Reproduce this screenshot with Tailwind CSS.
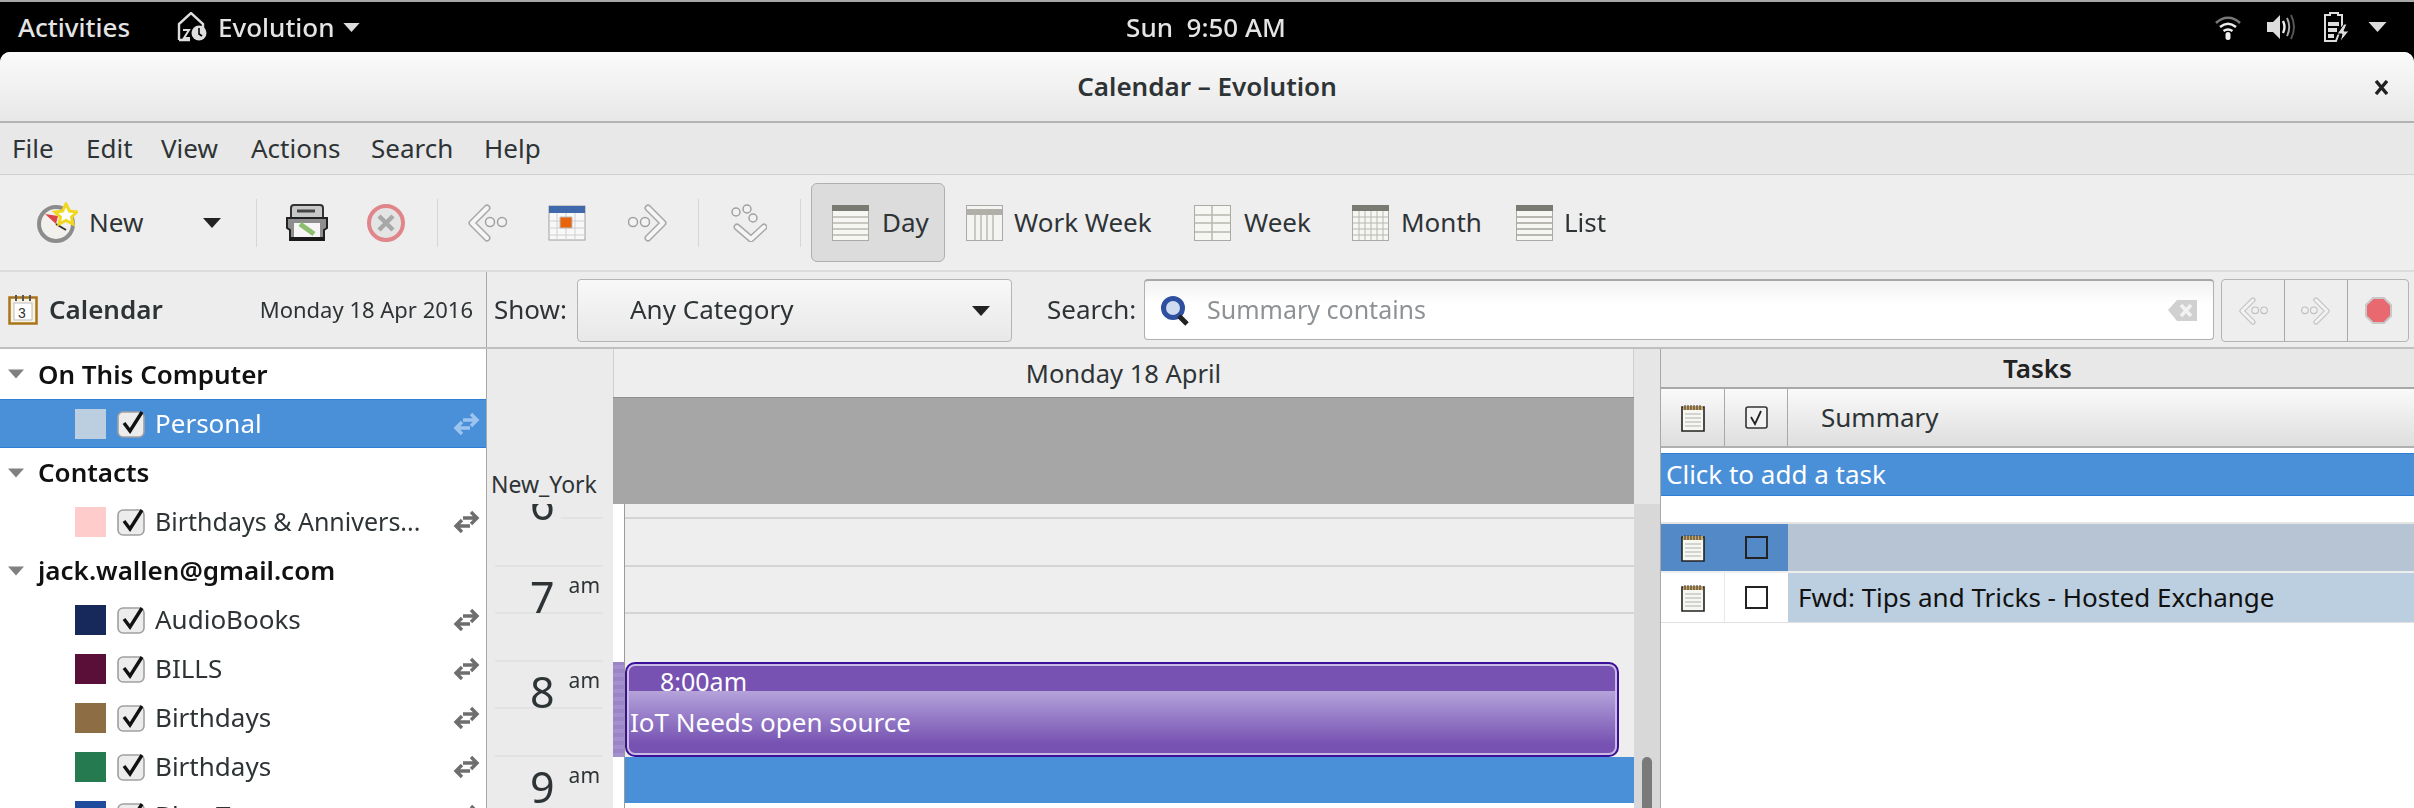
<!DOCTYPE html>
<html lang="en">
<head>
    <meta charset="UTF-8">
    <title>Calendar - Evolution</title>
    <script src="https://cdn.jsdelivr.net/npm/@tailwindcss/browser@4"></script>
</head>
<body class="bg-black overflow-hidden">
<svg class="hidden">
    <symbol id="sync" viewBox="0 0 27 26"><path d="M4 17h13M9 11l-6 6 6 6M23 9H10M18 3l6 6-6 6" fill="none" stroke="currentColor" stroke-width="3.4"/></symbol>
    <symbol id="check" viewBox="0 0 29 28"><rect x="1" y="2" width="26" height="25" rx="5" fill="#ececec" stroke="#a0a0a0" stroke-width="1.6"/><path d="M7 13l6 8L25 2" fill="none" stroke="#111" stroke-width="3.4"/></symbol>
    <symbol id="note" viewBox="0 0 24 28"><path d="M1 3h22v24H1z" fill="#f7f7f2" stroke="#222" stroke-width="1.6"/><path d="M2 2h20v4H2z" fill="#c9a868"/><path d="M4 1v5M7 1v5M10 1v5M13 1v5M16 1v5M19 1v5" stroke="#333" stroke-width="1"/><path d="M4 10h16M4 14h16M4 18h16M4 22h16" stroke="#c8c8c8" stroke-width="1.4"/></symbol>
    <symbol id="back" viewBox="0 0 40 38"><path d="M20 4L5 19l15 15" fill="none" stroke="#a8a8a8" stroke-width="7" stroke-linejoin="round" stroke-linecap="round"/><path d="M20 4L5 19l15 15" fill="none" stroke="#f5f5f5" stroke-width="4" stroke-linejoin="round" stroke-linecap="round"/><circle cx="23" cy="18" r="4.5" fill="#f2f2f2" stroke="#a0a0a0" stroke-width="1.5"/><circle cx="35" cy="18" r="4.5" fill="#f2f2f2" stroke="#a0a0a0" stroke-width="1.5"/></symbol>
    <symbol id="tri" viewBox="0 0 18 10"><path d="M0 0h18L9 10z" fill="currentColor"/></symbol>
</svg>

<div class="w-[2414px] h-[808px] overflow-hidden flex flex-col text-[26px] text-[#2e3436] font-['Noto_Sans','Open_Sans',sans-serif] blur-[0.5px]">

    <!-- top bar -->
    <div class="h-[52px] shrink-0 bg-black border-t-2 border-[#a8a8a8] text-[#e4e4e4] font-medium flex items-center relative">
        <span class="ml-[18px] w-[158px]">Activities</span>
        <svg class="w-[31px] h-[30px]" viewBox="0 0 31 30"><path d="M3 28V12L15 1l12 11v6M3 28h11" fill="none" stroke="#ddd" stroke-width="2.4"/><circle cx="23" cy="21" r="7.5" fill="#ddd"/><path d="M23 16v6l3 2" stroke="#000" stroke-width="1.6" fill="none"/><path d="M7 18h6l-5 8h6" fill="none" stroke="#ddd" stroke-width="2"/></svg>
        <span class="ml-[11px] w-[115px]">Evolution</span>
        <svg class="w-[17px] h-[9px] ml-[10px] text-[#ddd]"><use href="#tri"/></svg>
        <span class="absolute left-[1105px] w-[202px] text-center whitespace-pre">Sun  9:50 AM</span>
        <div class="ml-auto flex items-center">
            <svg class="w-[26px] h-[25px]" viewBox="0 0 26 25"><path d="M1 8c7-7 17-7 24 0" fill="none" stroke="#777" stroke-width="2.5"/><path d="M5 12c5-4 11-4 16 0M8.500 16c3-2 6-2 9 0" fill="none" stroke="#eee" stroke-width="2.5"/><rect x="10.500" y="17" width="5" height="8" rx="2.500" fill="#eee"/></svg>
            <svg class="w-[29px] h-[26px] ml-[25px]" viewBox="0 0 29 26"><path d="M1 8h6l7-7v24l-7-7H1z" fill="#ddd"/><path d="M17 7c2 4 2 8 0 12" fill="none" stroke="#eee" stroke-width="2.4"/><path d="M21 4c3 6 3 12 0 18" fill="none" stroke="#aaa" stroke-width="2"/><path d="M25 1c4 8 4 16 0 24" fill="none" stroke="#555" stroke-width="2"/></svg>
            <svg class="w-[27px] h-[30px] ml-[28px]" viewBox="0 0 27 30"><path d="M7 3V1h8v2h4v18h-3l-3 8H2V3z" fill="none" stroke="#ddd" stroke-width="2"/><path d="M5 10h11v4H5zM5 16h9v4H5zM5 22h6v4H5z" fill="#ddd"/><path d="M21 12l-7 10h5l-2 8 9-11h-5l3-7z" fill="#ddd" stroke="#000"/></svg>
            <svg class="w-[19px] h-[10px] ml-[18px] mr-[27px] text-[#ddd]"><use href="#tri"/></svg>
        </div>
    </div>

    <!-- window -->
    <div class="flex-1 min-h-0 bg-[#ededed] rounded-t-[10px] overflow-hidden flex flex-col">
        <!-- title bar -->
        <div class="h-[71px] shrink-0 bg-gradient-to-b from-[#fafafa] to-[#e8e8e8] border-b-2 border-[#b2b2b2] flex items-center justify-center relative">
            <span class="font-semibold text-[#2e3436]">Calendar – Evolution</span>
            <svg class="absolute right-[25px] top-[28px] w-[15px] h-[15px]" viewBox="0 0 15 15"><path d="M2 1l11 13M13 1L2 14" stroke="#222" stroke-width="3.4"/></svg>
        </div>

        <!-- menu bar -->
        <div class="h-[52px] shrink-0 bg-[#e8e8e8] border-b border-[#d2d2d2] flex items-center pl-[12px]">
            <span class="w-[74px]">File</span><span class="w-[75px]">Edit</span><span class="w-[90px]">View</span><span class="w-[120px]">Actions</span><span class="w-[113px]">Search</span><span>Help</span>
        </div>

        <!-- toolbar -->
        <div class="h-[97px] shrink-0 bg-[#eeeeee] border-b-2 border-[#dcdcdc] flex items-center whitespace-nowrap">
            <svg class="ml-[36px] w-[42px] h-[42px]" viewBox="0 0 42 42"><circle cx="20" cy="22" r="17" fill="#f2f0ec" stroke="#8c8c8c" stroke-width="4"/><path d="M20 22L9 12l13 2z" fill="#d44"/><path d="M20 22l10 6" stroke="#333" stroke-width="2"/><path d="M30 2l3.500 7 7.500 1-5.500 5 1.500 7-7-3.500-7 3.500 1.500-7-5.500-5 7.500-1z" fill="#fff" stroke="#f0d820" stroke-width="3"/></svg>
            <span class="ml-[11px] w-[57px]">New</span>
            <svg class="w-[18px] h-[10px] ml-[57px] text-[#222]"><use href="#tri"/></svg>
            <div class="w-px h-[48px] bg-[#d6d6d6] ml-[35px]"></div>
            <svg class="ml-[29px] w-[42px] h-[38px]" viewBox="0 0 42 38"><rect x="5" y="1" width="32" height="16" rx="3" fill="#c8c8c8" stroke="#333" stroke-width="2"/><path d="M11 7h18" stroke="#444" stroke-width="3"/><path d="M1 14h40v10l-3 2v10H4V26l-3-2z" fill="#8e8e8e" stroke="#222" stroke-width="2"/><path d="M8 19h26v14H8z" fill="#f6f6f6"/><path d="M14 20l14 10" stroke="#8cc070" stroke-width="5"/><path d="M4 33h34v4H4z" fill="#1a1a1a"/></svg>
            <svg class="ml-[38px] w-[40px] h-[40px]" viewBox="0 0 40 40"><circle cx="20" cy="20" r="17" fill="#e4e4e4" stroke="#e0858a" stroke-width="4"/><path d="M13 13l14 14M27 13L13 27" stroke="#a8a8a8" stroke-width="4.500"/></svg>
            <div class="w-px h-[48px] bg-[#d6d6d6] ml-[31px]"></div>
            <svg class="ml-[29px] w-[40px] h-[38px]"><use href="#back"/></svg>
            <svg class="ml-[41px] w-[38px] h-[36px]" viewBox="0 0 38 36"><rect x="1" y="1" width="36" height="34" fill="#f8f8f8" stroke="#a0a0a0"/><path d="M1 1h36v7H1z" fill="#3f69ac"/><path d="M1 16h36M1 23h36M1 30h36M9 8v27M18 8v27M27 8v27" stroke="#d0d0d0"/><path d="M12 12h12v11H12z" fill="#e8640c" stroke="#bbb"/></svg>
            <svg class="ml-[42px] w-[40px] h-[38px] -scale-x-100"><use href="#back"/></svg>
            <div class="w-px h-[48px] bg-[#d6d6d6] ml-[30px]"></div>
            <svg class="ml-[32px] w-[36px] h-[38px]" viewBox="0 0 36 38"><g fill="#f2f2f2" stroke="#a0a0a0" stroke-width="1.500"><circle cx="5" cy="8" r="4"/><circle cx="16" cy="5" r="4"/><circle cx="22" cy="14" r="4"/></g><path d="M6 23l14 12 13-12" fill="none" stroke="#a8a8a8" stroke-width="7" stroke-linejoin="round" stroke-linecap="round"/><path d="M6 23l14 12 13-12" fill="none" stroke="#f5f5f5" stroke-width="4" stroke-linejoin="round" stroke-linecap="round"/></svg>
            <div class="w-px h-[48px] bg-[#d6d6d6] ml-[33px]"></div>

            <div class="ml-[10px] w-[134px] h-[79px] rounded-[6px] bg-[#dcdcdc] border border-[#b0b0b0] flex items-center pl-[20px] gap-[13px]">
                <svg class="w-[37px] h-[36px]" viewBox="0 0 37 36"><rect x=".5" y=".5" width="36" height="35" fill="#f6f6f2" stroke="#aaa"/><path d="M0 0h37v6H0z" fill="#7a7a72"/><path d="M1 12h35M1 18h35M1 24h35M1 30h35" stroke="#c8c8c0" stroke-width="2"/></svg>
                <span>Day</span>
            </div>
            <svg class="ml-[21px] w-[37px] h-[36px]" viewBox="0 0 37 36"><rect x=".5" y=".5" width="36" height="35" fill="#f4f4f0" stroke="#aaa"/><path d="M1 4h35v6H1z" fill="#b0b0a8"/><path d="M9 10v25M15 10v25M21 10v25M27 10v25" stroke="#bbb" stroke-width="1.500"/></svg>
            <span class="ml-[11px] w-[142px]">Work Week</span>
            <svg class="ml-[38px] w-[37px] h-[36px]" viewBox="0 0 37 36"><rect x=".5" y=".5" width="36" height="35" fill="#f6f6f2" stroke="#aaa"/><path d="M1 10h35M1 18h35M1 27h35M18 1v34" stroke="#b8b8b0" stroke-width="1.500"/></svg>
            <span class="ml-[13px] w-[69px]">Week</span>
            <svg class="ml-[39px] w-[37px] h-[36px]" viewBox="0 0 37 36"><rect x=".5" y=".5" width="36" height="35" fill="#f6f6f2" stroke="#aaa"/><path d="M0 0h37v6H0z" fill="#7a7a72"/><path d="M1 12h35M1 18h35M1 24h35M1 30h35M7 6v29M13 6v29M19 6v29M25 6v29M31 6v29" stroke="#b8b8b0"/></svg>
            <span class="ml-[12px] w-[76px]">Month</span>
            <svg class="ml-[39px] w-[37px] h-[36px]" viewBox="0 0 37 36"><rect x=".5" y=".5" width="36" height="35" fill="#f6f6f2" stroke="#aaa"/><path d="M0 0h37v6H0z" fill="#7a7a72"/><path d="M1 12h35M1 18h35M1 24h35M1 30h35" stroke="#b8b8b0" stroke-width="2"/></svg>
            <span class="ml-[11px]">List</span>
        </div>

        <!-- switcher and search row -->
        <div class="h-[77px] shrink-0 bg-[#ededed] border-b-2 border-[#c0c0c0] flex whitespace-nowrap">
            <div class="w-[487px] shrink-0 border-r border-[#a8a8a8] flex items-center pl-[8px]">
                <svg class="w-[30px] h-[31px]" viewBox="0 0 30 31"><rect x="1.500" y="3.500" width="27" height="26" fill="#f6f2e4" stroke="#a87418" stroke-width="2.500"/><path d="M8 1v6M15 1v6M22 1v6" stroke="#555" stroke-width="2"/><rect x="6" y="9" width="18" height="17" fill="#fff" stroke="#bbb"/><text x="10" y="24" font-size="14" fill="#333" font-family="Liberation Sans">3</text></svg>
                <span class="ml-[11px] font-semibold">Calendar</span>
                <span class="ml-auto mr-[13px] text-[22px]">Monday 18 Apr 2016</span>
            </div>
            <span class="ml-[7px] w-[75px] self-center">Show:</span>
            <div class="ml-[8px] mt-[7px] w-[435px] h-[63px] rounded-[4px] border border-[#b4b4b4] bg-gradient-to-b from-[#f8f8f8] to-[#e8e8e8] flex items-center pl-[52px]">
                <span class="mb-[3px]">Any Category</span>
                <svg class="ml-auto mr-[21px] w-[18px] h-[10px] text-[#222]"><use href="#tri"/></svg>
            </div>
            <span class="ml-[35px] w-[90px] self-center">Search:</span>
            <div class="ml-[7px] mt-[7px] w-[1070px] h-[61px] rounded-[4px] border border-[#b0b0b0] border-t-2 border-t-[#a8a8a8] bg-gradient-to-b from-[#f2f2f2] to-white to-40% flex items-center pl-[15px]">
                <svg class="w-[31px] h-[31px]" viewBox="0 0 31 31"><circle cx="13" cy="13" r="9.500" fill="#cfdcf0" stroke="#2f4fa0" stroke-width="5"/><path d="M19 21l8 8" stroke="#222" stroke-width="5"/></svg>
                <span class="ml-[16px] text-[25px] text-[#8e9294]">Summary contains</span>
                <svg class="ml-auto mr-[15px] w-[31px] h-[23px]" viewBox="0 0 31 23"><path d="M10 1h20v21H10L1 11z" fill="#d0d0d0"/><path d="M14 6l10 11M24 6L14 17" stroke="#f2f2f2" stroke-width="3.500"/></svg>
            </div>
            <div class="ml-[7px] mt-[7px] w-[188px] h-[63px] rounded-[4px] border border-[#b4b4b4] bg-[#eeeeee] flex">
                <div class="w-[63px] border-r border-[#a8a8a8] flex items-center justify-center"><svg class="w-[30px] h-[28px] opacity-60"><use href="#back"/></svg></div>
                <div class="w-[63px] border-r border-[#a8a8a8] flex items-center justify-center"><svg class="w-[30px] h-[28px] opacity-60 -scale-x-100"><use href="#back"/></svg></div>
                <div class="flex-1 flex items-center justify-center"><svg class="w-[27px] h-[27px]" viewBox="0 0 27 27"><path d="M8 1h11l7 7v11l-7 7H8l-7-7V8z" fill="#e86a70" stroke="#c8c8c8" stroke-width="2"/></svg></div>
            </div>
        </div>

        <!-- main panes -->
        <div class="flex-1 min-h-0 flex">
            <!-- source list -->
            <div class="w-[487px] shrink-0 bg-white border-r border-[#a8a8a8] overflow-hidden whitespace-nowrap">
                <div class="h-[50px] flex items-center pl-[8px] text-[#111] font-semibold"><svg class="w-[16px] h-[10px] mr-[14px] text-[#808080]"><use href="#tri"/></svg>On This Computer</div>
                <div class="h-[49px] bg-[#4a90d9] border-y border-[#2f7fd6] flex items-center pl-[75px] text-white">
                    <div class="w-[31px] h-[30px] bg-[#bccfe0]"></div>
                    <svg class="w-[29px] h-[28px] ml-[11px]"><use href="#check"/></svg>
                    <span class="ml-[9px]">Personal</span>
                    <svg class="ml-auto mr-[6px] w-[27px] h-[26px] text-[#9cc4ef]"><use href="#sync"/></svg>
                </div>
                <div class="h-[49px] flex items-center pl-[8px] text-[#111] font-semibold"><svg class="w-[16px] h-[10px] mr-[14px] text-[#808080]"><use href="#tri"/></svg>Contacts</div>
                <div class="h-[49px] flex items-center pl-[75px]">
                    <div class="w-[31px] h-[30px] bg-[#ffcccc]"></div>
                    <svg class="w-[29px] h-[28px] ml-[11px]"><use href="#check"/></svg>
                    <span class="ml-[9px] text-[25px]">Birthdays &amp; Annivers...</span>
                    <svg class="ml-auto mr-[6px] w-[27px] h-[26px] text-[#6e6e6e]"><use href="#sync"/></svg>
                </div>
                <div class="h-[49px] flex items-center pl-[8px] text-[#111] font-semibold"><svg class="w-[16px] h-[10px] mr-[14px] text-[#808080]"><use href="#tri"/></svg>jack.wallen@gmail.com</div>
                <div class="h-[49px] flex items-center pl-[75px]">
                    <div class="w-[31px] h-[30px] bg-[#16295a]"></div>
                    <svg class="w-[29px] h-[28px] ml-[11px]"><use href="#check"/></svg>
                    <span class="ml-[9px]">AudioBooks</span>
                    <svg class="ml-auto mr-[6px] w-[27px] h-[26px] text-[#6e6e6e]"><use href="#sync"/></svg>
                </div>
                <div class="h-[49px] flex items-center pl-[75px]">
                    <div class="w-[31px] h-[30px] bg-[#5a0f38]"></div>
                    <svg class="w-[29px] h-[28px] ml-[11px]"><use href="#check"/></svg>
                    <span class="ml-[9px]">BILLS</span>
                    <svg class="ml-auto mr-[6px] w-[27px] h-[26px] text-[#6e6e6e]"><use href="#sync"/></svg>
                </div>
                <div class="h-[49px] flex items-center pl-[75px]">
                    <div class="w-[31px] h-[30px] bg-[#8c6d44]"></div>
                    <svg class="w-[29px] h-[28px] ml-[11px]"><use href="#check"/></svg>
                    <span class="ml-[9px]">Birthdays</span>
                    <svg class="ml-auto mr-[6px] w-[27px] h-[26px] text-[#6e6e6e]"><use href="#sync"/></svg>
                </div>
                <div class="h-[49px] flex items-center pl-[75px]">
                    <div class="w-[31px] h-[30px] bg-[#267a50]"></div>
                    <svg class="w-[29px] h-[28px] ml-[11px]"><use href="#check"/></svg>
                    <span class="ml-[9px]">Birthdays</span>
                    <svg class="ml-auto mr-[6px] w-[27px] h-[26px] text-[#6e6e6e]"><use href="#sync"/></svg>
                </div>
                <div class="h-[49px] flex items-center pl-[75px]">
                    <div class="w-[31px] h-[30px] bg-[#1f4b9c]"></div>
                    <svg class="w-[29px] h-[28px] ml-[11px]"><use href="#check"/></svg>
                    <span class="ml-[9px]">Blue Team</span>
                    <svg class="ml-auto mr-[6px] w-[27px] h-[26px] text-[#6e6e6e]"><use href="#sync"/></svg>
                </div>
            </div>

            <!-- time column -->
            <div class="w-[126px] shrink-0 bg-[#ebebeb] overflow-hidden flex flex-col whitespace-nowrap">
                <div class="h-[155px] shrink-0 relative z-10 bg-[#ebebeb]">
                    <span class="absolute left-[4px] bottom-[3px] text-[23px]">New_York</span>
                </div>
                <div class="h-[15px] shrink-0 relative">
                    <span class="absolute left-[43px] top-[-22px] text-[43px] leading-[43px]">6</span>
                    <div class="absolute bottom-0 left-[74px] w-[42px] h-[2px] bg-[#e2e2e2]"></div>
                </div>
                <div class="h-[48px] shrink-0 border-b-2 border-[#e2e2e2] ml-[8px] mr-[10px]"></div>
                <div class="h-[47px] shrink-0 pl-[35px] flex items-start gap-[14px] mr-[10px] ml-[8px] border-b-2 border-[#e2e2e2] relative">
                    <span class="text-[43px] leading-[43px] mt-[8px]">7</span><span class="text-[21px] leading-[24px] mt-[6px]">am</span>
                </div>
                <div class="h-[48px] shrink-0 border-b-2 border-[#e2e2e2] ml-[8px] mr-[10px]"></div>
                <div class="h-[47px] shrink-0 pl-[35px] flex items-start gap-[14px] mr-[10px] ml-[8px] border-b-2 border-[#e2e2e2]">
                    <span class="text-[43px] leading-[43px] mt-[8px]">8</span><span class="text-[21px] leading-[24px] mt-[6px]">am</span>
                </div>
                <div class="h-[48px] shrink-0 border-b-2 border-[#e2e2e2] ml-[8px] mr-[10px]"></div>
                <div class="h-[47px] shrink-0 pl-[35px] flex items-start gap-[14px] ml-[8px] mr-[10px]">
                    <span class="text-[43px] leading-[43px] mt-[8px]">9</span><span class="text-[21px] leading-[24px] mt-[6px]">am</span>
                </div>
            </div>

            <!-- day view -->
            <div class="w-[1021px] shrink-0 flex flex-col bg-white whitespace-nowrap">
                <div class="h-[48px] shrink-0 bg-[#eeeeee] border-x border-[#cfcfcf] flex items-center justify-center text-[25.500px]">Monday 18 April</div>
                <div class="h-[107px] shrink-0 bg-[#a6a6a6] border-t border-[#8e8e8e]"></div>
                <div class="flex-1 flex min-h-0">
                    <div class="w-[12px] shrink-0 border-r border-[#9a9a9a] flex flex-col">
                        <div class="h-[158px] shrink-0"></div>
                        <div class="h-[95px] shrink-0 bg-[repeating-linear-gradient(0deg,#a390cc_0px,#a390cc_4px,#9a86c6_4px,#9a86c6_8px)]"></div>
                    </div>
                    <div class="flex-1 flex flex-col">
                        <div class="h-[15px] shrink-0 bg-[#eeeeee] border-b-2 border-[#d4d4d4]"></div>
                        <div class="h-[48px] shrink-0 bg-[#eeeeee] border-b-2 border-[#d4d4d4]"></div>
                        <div class="h-[47px] shrink-0 bg-[#eeeeee] border-b-2 border-[#d4d4d4]"></div>
                        <div class="h-[48px] shrink-0 bg-[#eeeeee]"></div>
                        <div class="h-[95px] shrink-0 bg-[#eeeeee] pr-[15px]">
                            <div class="h-[95px] rounded-[10px] border-2 border-[#3c0f9a] bg-[#7752b2] overflow-hidden text-white relative">
                                <div class="absolute inset-0 rounded-[8px] border-2 border-[#c9bce4]"></div>
                                <div class="h-[27px] pl-[33px] leading-[25px] pt-[5px] text-[25px]">8:00am</div>
                                <div class="h-[66px] bg-gradient-to-b from-[#b5a3da] to-[#7752b2] to-80% pl-[3px] pt-[12px]">IoT Needs open source</div>
                            </div>
                        </div>
                        <div class="h-[46px] shrink-0 bg-[#4a90d9]"></div>
                    </div>
                </div>
            </div>

            <!-- scrollbar -->
            <div class="w-[26px] shrink-0 bg-[#e6e6e6] flex flex-col items-center">
                <div class="h-[155px] w-full bg-[#e6e6e6]"></div>
                <div class="flex-1 w-full bg-[#d8d8d8] flex flex-col items-center">
                    <div class="h-[253px] shrink-0"></div>
                    <div class="flex-1 w-[10px] rounded-t-[5px] bg-[#7a7a7a]"></div>
                </div>
            </div>

            <!-- tasks -->
            <div class="flex-1 bg-white border-l border-[#a8a8a8] flex flex-col whitespace-nowrap">
                <div class="h-[40px] shrink-0 bg-[#e8e8e8] border-b-2 border-[#a8a8a8] flex items-center justify-center font-semibold text-[#222]">Tasks</div>
                <div class="h-[59px] shrink-0 bg-gradient-to-b from-[#fafafa] to-[#dedede] border-b-2 border-[#b0b0b0] flex">
                    <div class="w-[64px] border-r border-[#a8a8a8] flex items-center justify-center"><svg class="w-[24px] h-[28px]"><use href="#note"/></svg></div>
                    <div class="w-[63px] border-r border-[#a8a8a8] flex items-center justify-center"><svg class="w-[23px] h-[23px]" viewBox="0 0 23 23"><rect x="1" y="1" width="21" height="21" rx="2" fill="#f2f2f2" stroke="#333" stroke-width="1.600"/><path d="M6 11l4 7 6-13" fill="none" stroke="#222" stroke-width="1.800"/></svg></div>
                    <span class="ml-[33px] self-center">Summary</span>
                </div>
                <div class="mt-[5px] h-[43px] shrink-0 bg-[#4a90d9] border-y border-[#2f7fd6] flex items-center pl-[5px] text-white">Click to add a task</div>
                <div class="h-[28px] shrink-0 border-b-2 border-[#e4e4e4]"></div>
                <div class="h-[49px] shrink-0 flex border-b-2 border-[#eeeeee]">
                    <div class="w-[64px] bg-[#5289c6] flex items-center justify-center"><svg class="w-[24px] h-[28px]"><use href="#note"/></svg></div>
                    <div class="w-[63px] bg-[#5289c6] flex items-center justify-center"><div class="w-[23px] h-[23px] border-2 border-[#222]"></div></div>
                    <div class="flex-1 bg-[#b7c4d3]"></div>
                </div>
                <div class="h-[50px] shrink-0 flex border-b border-[#e0e0e0]">
                    <div class="w-[64px] border-r border-[#e8e8e8] flex items-center justify-center"><svg class="w-[24px] h-[28px]"><use href="#note"/></svg></div>
                    <div class="w-[63px] flex items-center justify-center"><div class="w-[23px] h-[23px] border-2 border-[#222]"></div></div>
                    <div class="flex-1 bg-[#bccfe0] flex items-center pl-[10px] text-[#111]">Fwd: Tips and Tricks - Hosted Exchange</div>
                </div>
            </div>
        </div>
    </div>
</div>
</body>
</html>
